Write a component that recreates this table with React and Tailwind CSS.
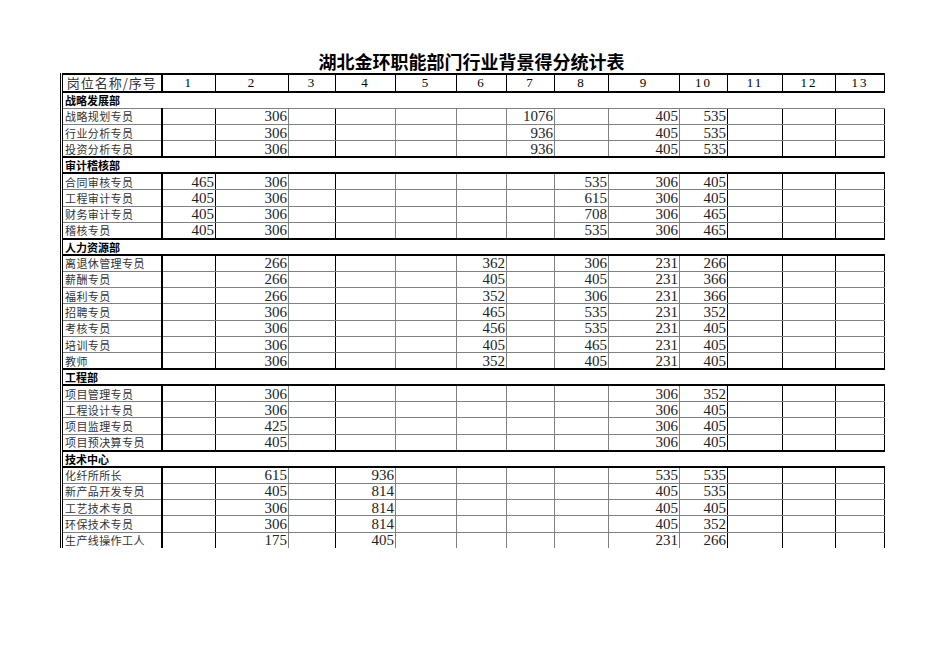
import React from 'react';

const widths = [100, 54, 73, 47, 60, 61, 50, 48, 54, 71, 48, 55, 53, 49];

// right-edge line of every data column
const rightLine = [
  'border-r-2 border-r-black',
  'border-r border-r-black',
  'border-r border-r-[#808080]',
  'border-r border-r-black',
  'border-r border-r-[#808080]',
  'border-r border-r-[#808080]',
  'border-r border-r-[#808080]',
  'border-r border-r-[#808080]',
  'border-r border-r-[#808080]',
  'border-r border-r-[#808080]',
  'border-r border-r-black',
  'border-r border-r-black',
  'border-r border-r-black',
  'border-r border-r-black',
];

const sections = [
  {
    name: '战略发展部',
    rows: [
      ['战略规划专员', { 2: 306, 7: 1076, 9: 405, 10: 535 }],
      ['行业分析专员', { 2: 306, 7: 936, 9: 405, 10: 535 }],
      ['投资分析专员', { 2: 306, 7: 936, 9: 405, 10: 535 }],
    ],
  },
  {
    name: '审计稽核部',
    rows: [
      ['合同审核专员', { 1: 465, 2: 306, 8: 535, 9: 306, 10: 405 }],
      ['工程审计专员', { 1: 405, 2: 306, 8: 615, 9: 306, 10: 405 }],
      ['财务审计专员', { 1: 405, 2: 306, 8: 708, 9: 306, 10: 465 }],
      ['稽核专员', { 1: 405, 2: 306, 8: 535, 9: 306, 10: 465 }],
    ],
  },
  {
    name: '人力资源部',
    rows: [
      ['离退休管理专员', { 2: 266, 6: 362, 8: 306, 9: 231, 10: 266 }],
      ['薪酬专员', { 2: 266, 6: 405, 8: 405, 9: 231, 10: 366 }],
      ['福利专员', { 2: 266, 6: 352, 8: 306, 9: 231, 10: 366 }],
      ['招聘专员', { 2: 306, 6: 465, 8: 535, 9: 231, 10: 352 }],
      ['考核专员', { 2: 306, 6: 456, 8: 535, 9: 231, 10: 405 }],
      ['培训专员', { 2: 306, 6: 405, 8: 465, 9: 231, 10: 405 }],
      ['教师', { 2: 306, 6: 352, 8: 405, 9: 231, 10: 405 }],
    ],
  },
  {
    name: '工程部',
    rows: [
      ['项目管理专员', { 2: 306, 9: 306, 10: 352 }],
      ['工程设计专员', { 2: 306, 9: 306, 10: 405 }],
      ['项目监理专员', { 2: 425, 9: 306, 10: 405 }],
      ['项目预决算专员', { 2: 405, 9: 306, 10: 405 }],
    ],
  },
  {
    name: '技术中心',
    rows: [
      ['化纤所所长', { 2: 615, 4: 936, 9: 535, 10: 535 }],
      ['新产品开发专员', { 2: 405, 4: 814, 9: 405, 10: 535 }],
      ['工艺技术专员', { 2: 306, 4: 814, 9: 405, 10: 405 }],
      ['环保技术专员', { 2: 306, 4: 814, 9: 405, 10: 352 }],
      ['生产线操作工人', { 2: 175, 4: 405, 9: 231, 10: 266 }],
    ],
  },
];

const cjk = "font-['Noto_Sans_CJK_SC',sans-serif]";
const serif = "font-['Liberation_Serif','Noto_Sans_CJK_SC',serif]";

const App = () => {
  return (
    <div className="w-[950px] h-[672px] bg-white pt-[51px] pl-[60px]">
      <div className="w-[823px] h-[20px] flex justify-center">
        <h1 className={`${cjk} text-[18px] leading-[20px] font-bold text-black`}>
          湖北金环职能部门行业背景得分统计表
        </h1>
      </div>
      <table className="mt-[2px] border-collapse table-fixed w-[823px]">
        <colgroup>
          {widths.map((w, i) => (
            <col key={i} style={{ width: w }} />
          ))}
        </colgroup>
        <thead>
          <tr>
            <th className={`${cjk} h-[18px] p-0 text-[13px] leading-[14px] font-normal text-[#333] tracking-[1px] border-l-[3px] border-double border-l-black border-t-2 border-t-black border-b-2 border-b-black border-r-2 border-r-black`}>
              岗位名称/序号
            </th>
            {widths.slice(1).map((w, i) => (
              <th
                key={i}
                className={`${serif} h-[18px] p-0 text-[13px] leading-[14px] font-normal text-black tracking-[2px] border-t-2 border-t-black border-b-2 border-b-black border-r border-r-black`}
              >
                {i + 1}
              </th>
            ))}
          </tr>
        </thead>
        <tbody>
          {sections.map((sec, si) => (
            <React.Fragment key={sec.name}>
              <tr>
                <td
                  colSpan={14}
                  className={`${cjk} h-[16.3px] p-0 pl-[2px] text-[11px] leading-[14px] font-bold text-black border-l-[3px] border-double border-l-black ${si === 0 ? 'border-b border-b-[#808080]' : 'border-b-2 border-b-black'}`}
                >
                  {sec.name}
                </td>
              </tr>
              {sec.rows.map(([name, vals], ri) => {
                const last = ri === sec.rows.length - 1;
                const bottom = last
                  ? si === sections.length - 1
                    ? ''
                    : 'border-b-2 border-b-black'
                  : 'border-b border-b-[#808080]';
                return (
                  <tr key={name}>
                    <td
                      className={`${cjk} h-[16.3px] p-0 pl-[2px] text-[11px] leading-[14px] text-[#333] tracking-[0.4px] whitespace-nowrap border-l-[3px] border-double border-l-black ${rightLine[0]} ${bottom}`}
                    >
                      {name}
                    </td>
                    {widths.slice(1).map((w, ci) => (
                      <td
                        key={ci}
                        className={`${serif} h-[16.3px] p-0 pr-[1px] text-right text-[15px] leading-[14px] text-[#222] ${rightLine[ci + 1]} ${bottom}`}
                      >
                        {vals[ci + 1] ?? ''}
                      </td>
                    ))}
                  </tr>
                );
              })}
            </React.Fragment>
          ))}
        </tbody>
      </table>
    </div>
  );
};

export default App;
